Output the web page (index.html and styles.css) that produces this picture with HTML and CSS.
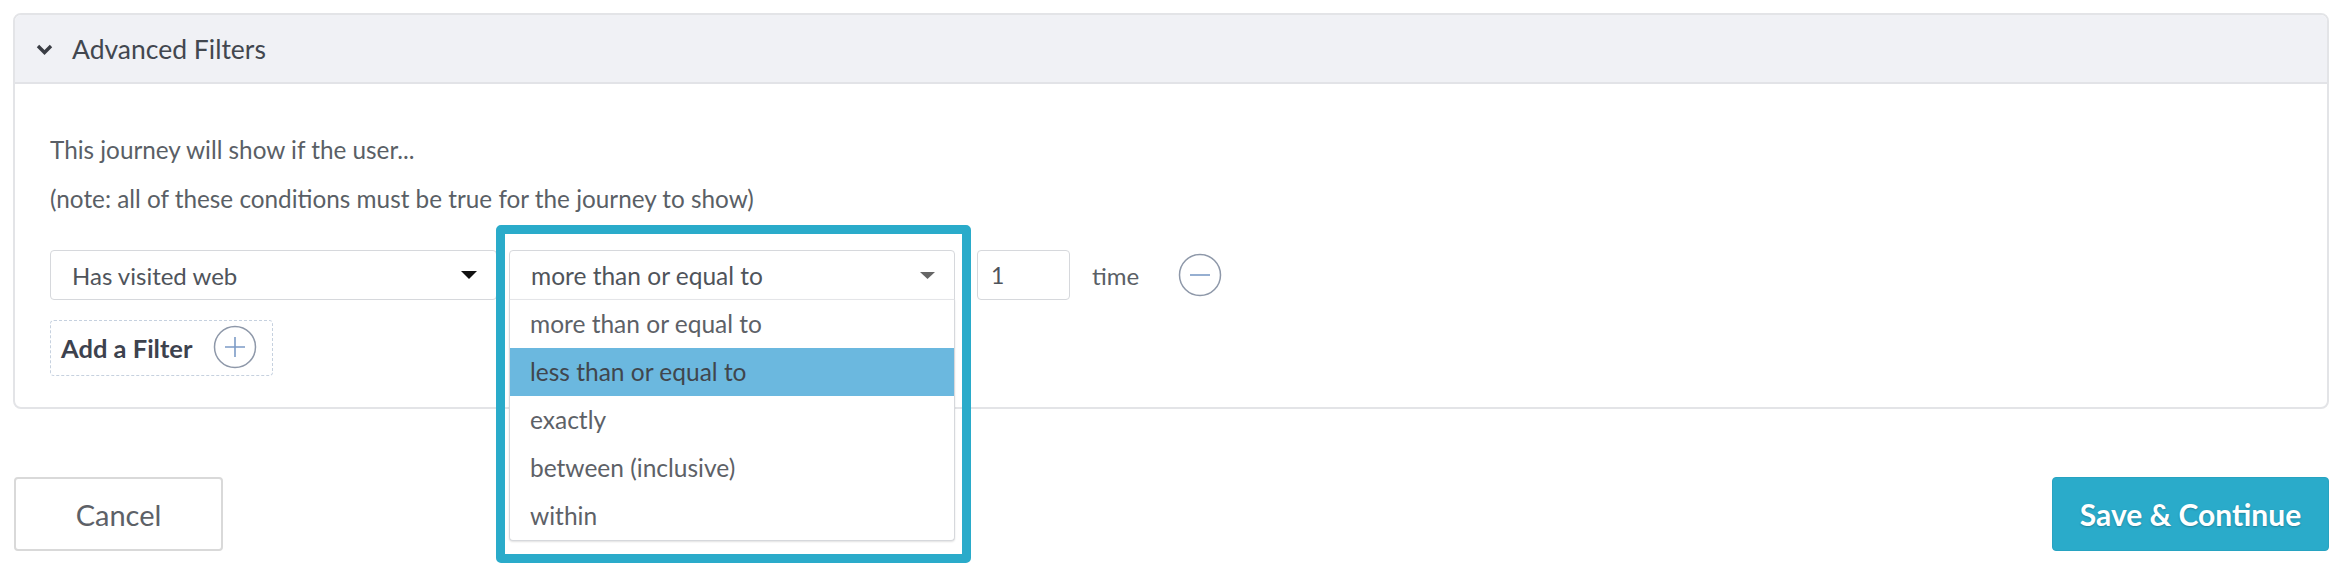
FILE: index.html
```html
<!DOCTYPE html>
<html lang="en">
<head>
<meta charset="utf-8">
<title>Advanced Filters</title>
<link rel="stylesheet" href="styles.css">
</head>
<body>
<div class="page">
  <section class="panel">
    <header class="panel-head">
      <svg class="chevron" width="17" height="11" viewBox="0 0 17 11"><path d="M2 2 L8.5 8.5 L15 2" fill="none" stroke="#3a3d44" stroke-width="3.4"/></svg>
      <span class="head-title">Advanced Filters</span>
    </header>
    <div class="panel-body">
      <p class="intro">This journey will show if the user...</p>
      <p class="note">(note: all of these conditions must be true for the journey to show)</p>
      <div class="filter-row">
        <div class="select select-type">
          <span>Has visited web</span>
          <svg class="caret" width="16" height="8" viewBox="0 0 16 8"><path d="M0 0 H16 L8 8 Z" fill="#111"/></svg>
        </div>
        <div class="dropdown">
          <div class="select select-op">
            <span>more than or equal to</span>
            <svg class="caret" width="15" height="7" viewBox="0 0 15 7"><path d="M0 0 H15 L7.5 7 Z" fill="#666"/></svg>
          </div>
          <ul class="options">
            <li class="option">more than or equal to</li>
            <li class="option active">less than or equal to</li>
            <li class="option">exactly</li>
            <li class="option">between (inclusive)</li>
            <li class="option">within</li>
          </ul>
          <div class="callout"></div>
        </div>
        <div class="count">1</div>
        <span class="unit">time</span>
        <span class="circle-btn">
          <svg width="44" height="44" viewBox="0 0 44 44"><circle cx="22" cy="22" r="20.5" fill="none" stroke="#8e98a9" stroke-width="1.5"/><path d="M12 22 H32" stroke="#7c9bc6" stroke-width="1.6"/></svg>
        </span>
      </div>
      <div class="add-filter">
        <span class="add-label">Add a Filter</span>
        <svg width="44" height="44" viewBox="0 0 44 44"><circle cx="22" cy="22" r="20.5" fill="none" stroke="#8e98a9" stroke-width="1.5"/><path d="M12 22 H32 M22 12 V32" stroke="#7c9bc6" stroke-width="1.6"/></svg>
      </div>
    </div>
  </section>
  <div class="actions">
    <button class="btn btn-cancel">Cancel</button>
    <button class="btn btn-save">Save &amp; Continue</button>
  </div>
</div>
</body>
</html>
```
FILE: styles.css
```css
* { box-sizing: border-box; }
html, body { margin: 0; padding: 0; background: #fff; }
body {
  font-family: Lato, "Open Sans", sans-serif;
  color: #5a5f66;
  width: 2346px;
  height: 588px;
  overflow: hidden;
}
.page { padding: 13px 17px 0 13px; }

.panel {
  border: 2px solid #e3e4e7;
  border-radius: 8px;
  height: 396px;
}
.panel-head {
  height: 69px;
  background: #f0f1f5;
  border-bottom: 2px solid #e2e3e7;
  border-radius: 6px 6px 0 0;
  display: flex;
  align-items: center;
  padding-left: 21px;
  gap: 19px;
}
.chevron { margin-top: 1px; }
.head-title { font-size: 26.5px; color: #42474f; }
.panel-body { padding: 51px 0 0 35px; }
.intro, .note { margin: 0; font-size: 24.3px; line-height: 30px; }
.note { margin-top: 19px; }

.filter-row {
  display: flex;
  align-items: center;
  margin-top: 36px;
  height: 50px;
}
.select {
  height: 50px;
  border: 1px solid #d6d8dc;
  border-radius: 4px;
  background: #fff;
  display: flex;
  align-items: center;
  justify-content: space-between;
  font-size: 24px;
  color: #4f545b;
  padding: 0 19px 0 21px;
}
.select-type { width: 447px; }
.dropdown { position: relative; width: 446px; margin-left: 12px; }
.select-op { width: 446px; font-size: 24.5px; border-radius: 4px 4px 0 0; }
.options {
  position: absolute;
  left: 0; top: 49px;
  width: 446px;
  margin: 0; padding: 0;
  list-style: none;
  background: #fff;
  border: 1px solid #d6d8dc;
  border-top: 1px solid #e4e5e8;
  border-radius: 0 0 4px 4px;
  box-shadow: 0 1px 2px rgba(0,0,0,0.12);
  z-index: 2;
}
.option {
  height: 48px;
  line-height: 48px;
  padding-left: 20px;
  font-size: 24.5px;
  color: #5d6167;
}
.option.active { background: #6bb8df; color: #40464d; }
.callout {
  position: absolute;
  left: -13px; top: -25px;
  width: 475px; height: 338px;
  border: 9px solid #2aabca;
  border-radius: 5px;
  z-index: 3;
  pointer-events: none;
}
.count {
  width: 93px; height: 50px;
  margin-left: 22px;
  border: 1px solid #d6d8dc;
  border-radius: 4px;
  font-size: 23px;
  line-height: 48px;
  padding-left: 13px;
  color: #4f545b;
}
.unit { margin-left: 22px; font-size: 24px; color: #5a5f66; }
.circle-btn { margin-left: 39px; display: flex; }

.add-filter {
  margin-top: 20px;
  width: 223px; height: 56px;
  border: 1.5px dashed #c6d1df;
  border-radius: 4px;
  display: flex;
  align-items: center;
  padding-left: 10px;
  gap: 21px;
}
.add-label { font-size: 25.5px; font-weight: 700; color: #3d424e; }
.add-filter svg { margin-top: -2px; }

.actions {
  display: flex;
  justify-content: space-between;
  margin-top: 68px;
  padding-left: 1px;
}
.btn {
  height: 74px;
  border-radius: 4px;
  font-family: inherit;
  cursor: pointer;
}
.btn-cancel {
  width: 209px;
  background: #fff;
  border: 2px solid #d9d9d9;
  color: #5d6167;
  font-size: 29px;
}
.btn-save {
  width: 277px;
  background: #2aabca;
  border: 1px solid #27a3c1;
  color: #fff;
  font-weight: 700;
  font-size: 30px;
  text-shadow: 0 1px 2px rgba(0,0,0,0.25);
}
```
